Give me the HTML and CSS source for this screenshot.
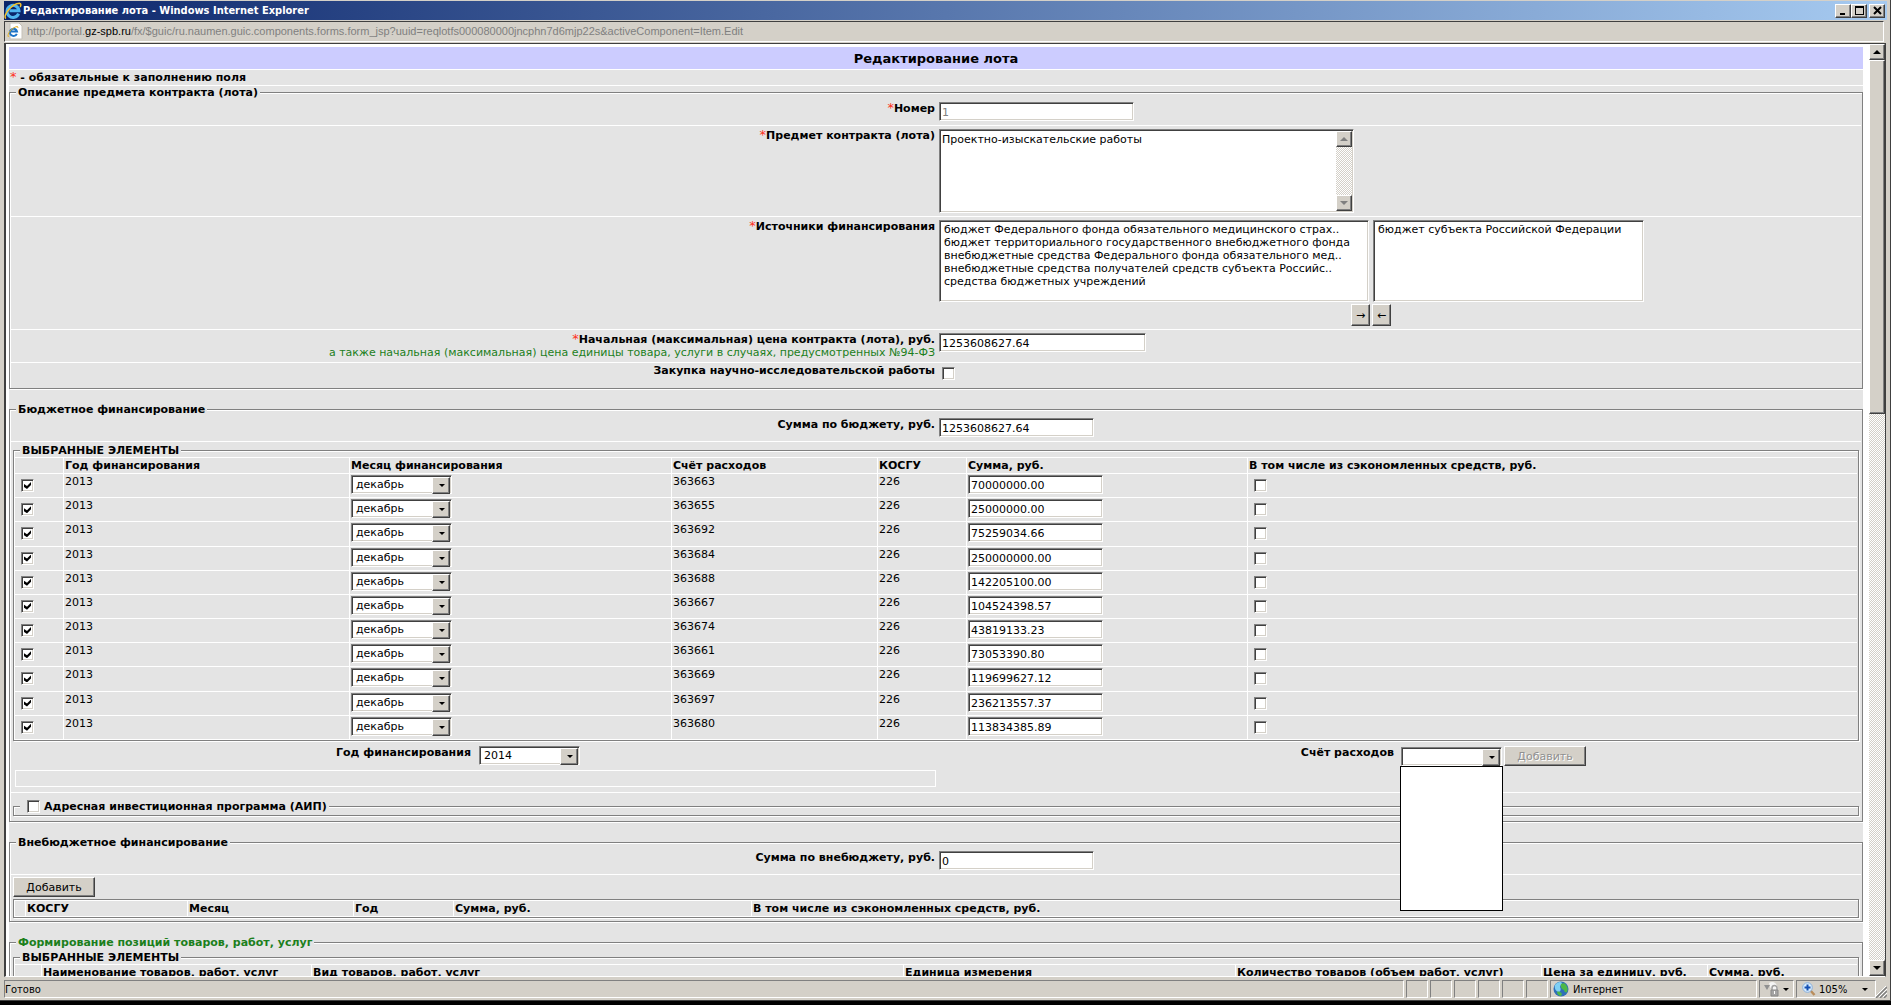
FILE: index.html
```html
<!DOCTYPE html>
<html lang="ru">
<head>
    <meta charset="UTF-8">
    <meta name="viewport" content="width=device-width, initial-scale=1.0">
    <title>Редактирование лота</title>
    <link rel="stylesheet" href="styles.css">
</head>
<body>

<div class="window">
    <header class="titlebar">
        <svg class="ie-icon" width="18" height="18" viewBox="0 0 18 18">
            <path d="M14.6 11.6A6 6 0 1 1 15 8.800H5.500" fill="none" stroke="#4fb4f0" stroke-width="3"/>
            <path d="M2 16.500C-2 14 8 1.500 15.500 1.300c2 .2 1.500 2.200 .6 3.700" fill="none" stroke="#f4c32c" stroke-width="1.500"/>
        </svg>
        <span class="titlebar-text">Редактирование лота - Windows Internet Explorer</span>
        <div class="titlebar-buttons">
            <button type="button" class="win-btn" aria-label="Свернуть"><svg width="9" height="9" viewBox="0 0 9 9"><path d="M1 7h5v2H1z"/></svg></button>
            <button type="button" class="win-btn" aria-label="Развернуть"><svg width="9" height="9" viewBox="0 0 9 9"><path d="M0 0h9v9H0zM1 2v6h7V2z" fill-rule="evenodd"/></svg></button>
            <button type="button" class="win-btn win-close" aria-label="Закрыть"><svg width="9" height="9" viewBox="0 0 9 9"><path d="M1 1l7 7M8 1l-7 7" stroke="#000" stroke-width="2"/></svg></button>
        </div>
    </header>

    <div class="address">
        <svg width="16" height="17" viewBox="0 0 16 17">
            <path d="M3 0h9l3 3v13H3z" fill="#fff" stroke="#c4c0b8"/>
            <path d="M9.800 10.800A3.600 3.600 0 1 1 10 8.500H4" fill="none" stroke="#1e74c8" stroke-width="2"/>
            <path d="M1.500 14C-1 11.500 6 3.500 10.500 3.500l.5 1.500" fill="none" stroke="#e8b020" stroke-width="1"/>
        </svg>
        <span class="address-url">http://portal.<b>gz-spb.ru</b>/fx/$guic/ru.naumen.guic.components.forms.form_jsp?uuid=reqlotfs000080000jncphn7d6mjp22s&amp;activeComponent=Item.Edit</span>
    </div>

    <div class="viewport">
        <form class="page">
            <div class="form-body">
                <h1>Редактирование лота</h1>
                <p class="required-note"><span class="star">*</span> - обязательные к заполнению поля</p>

                <fieldset class="section">
                    <legend>Описание предмета контракта (лота)</legend>
                    <div class="row">
                        <label for="number"><span class="star">*</span>Номер</label>
                        <div class="value"><input type="text" id="number" class="w-number" value="1" disabled></div>
                    </div>
                    <div class="row">
                        <label for="subject"><span class="star">*</span>Предмет контракта (лота)</label>
                        <div class="value">
                            <div class="memo">
                                <textarea id="subject">Проектно-изыскательские работы</textarea>
                                <div class="scroll disabled">
                                    <span class="scroll-btn up"></span>
                                    <span class="scroll-btn down"></span>
                                </div>
                            </div>
                        </div>
                    </div>
                    <div class="row">
                        <label for="sources"><span class="star">*</span>Источники финансирования</label>
                        <div class="value">
                            <div class="picker">
                                <select id="sources" class="list list-all" size="6">
                                    <option>бюджет Федерального фонда обязательного медицинского страх..</option>
                                    <option>бюджет территориального государственного внебюджетного фонда</option>
                                    <option>внебюджетные средства Федерального фонда обязательного мед..</option>
                                    <option>внебюджетные средства получателей средств субъекта Российс..</option>
                                    <option>средства бюджетных учреждений</option>
                                </select>
                                <select class="list list-chosen" size="6" aria-label="Выбранные источники">
                                    <option>бюджет субъекта Российской Федерации</option>
                                </select>
                            </div>
                            <div class="picker-buttons">
                                <button type="button">→</button>
                                <button type="button">←</button>
                            </div>
                        </div>
                    </div>
                    <div class="row">
                        <label for="price"><span class="star">*</span>Начальная (максимальная) цена контракта (лота), руб.
                            <small>а также начальная (максимальная) цена единицы товара, услуги в случаях, предусмотренных №94-ФЗ</small></label>
                        <div class="value"><input type="text" id="price" class="w-price" value="1253608627.64"></div>
                    </div>
                    <div class="row row-check">
                        <label for="research">Закупка научно-исследовательской работы</label>
                        <div class="value"><input type="checkbox" id="research"></div>
                    </div>
                </fieldset>

                <fieldset class="section">
                    <legend>Бюджетное финансирование</legend>
                    <div class="row row-sum">
                        <label for="budget">Сумма по бюджету, руб.</label>
                        <div class="value"><input type="text" id="budget" class="w-sum" value="1253608627.64"></div>
                    </div>

                    <fieldset class="group">
                        <legend>ВЫБРАННЫЕ ЭЛЕМЕНТЫ</legend>
                        <table class="items">
                            <colgroup>
                                <col class="c-check"><col class="c-year"><col class="c-month"><col class="c-account"><col class="c-kosgu"><col class="c-sum"><col>
                            </colgroup>
                            <thead>
                                <tr>
                                    <th></th>
                                    <th>Год финансирования</th>
                                    <th>Месяц финансирования</th>
                                    <th>Счёт расходов</th>
                                    <th>КОСГУ</th>
                                    <th>Сумма, руб.</th>
                                    <th>В том числе из сэкономленных средств, руб.</th>
                                </tr>
                            </thead>
                            <tbody id="items"></tbody>
                        </table>
                    </fieldset>

                    <div class="new-line">
                        <div class="adding">
                            <div class="adding-year">
                                <label for="year">Год финансирования</label>
                                <span class="combo"><select id="year"><option>2014</option></select></span>
                            </div>
                            <div class="adding-account">
                                <label for="account">Счёт расходов</label>
                                <span class="combo">
                                    <select id="account"><option></option></select>
                                    <span class="dropdown"></span>
                                </span>
                                <button type="button" disabled>Добавить</button>
                            </div>
                        </div>
                        <div class="placeholder"></div>
                    </div>

                    <fieldset class="group aip">
                        <legend><input type="checkbox" id="aip"><label for="aip">Адресная инвестиционная программа (АИП)</label></legend>
                    </fieldset>
                </fieldset>

                <fieldset class="section">
                    <legend>Внебюджетное финансирование</legend>
                    <div class="row row-sum">
                        <label for="extra">Сумма по внебюджету, руб.</label>
                        <div class="value"><input type="text" id="extra" class="w-sum" value="0"></div>
                    </div>
                    <button type="button" class="add-extra">Добавить</button>
                    <fieldset class="group">
                        <table class="extra">
                            <colgroup>
                                <col class="e-mark"><col class="e-kosgu"><col class="e-month"><col class="e-year"><col class="e-sum"><col>
                            </colgroup>
                            <tr>
                                <th></th>
                                <th>КОСГУ</th>
                                <th>Месяц</th>
                                <th>Год</th>
                                <th>Сумма, руб.</th>
                                <th>В том числе из сэкономленных средств, руб.</th>
                            </tr>
                        </table>
                    </fieldset>
                </fieldset>

                <fieldset class="section">
                    <legend class="green">Формирование позиций товаров, работ, услуг</legend>
                    <fieldset class="group">
                        <legend>ВЫБРАННЫЕ ЭЛЕМЕНТЫ</legend>
                        <table class="goods">
                            <colgroup>
                                <col class="g-mark"><col class="g-name"><col class="g-kind"><col class="g-unit"><col class="g-count"><col class="g-price"><col>
                            </colgroup>
                            <tr>
                                <th></th>
                                <th>Наименование товаров, работ, услуг</th>
                                <th>Вид товаров, работ, услуг</th>
                                <th>Единица измерения</th>
                                <th>Количество товаров (объем работ, услуг)</th>
                                <th>Цена за единицу, руб.</th>
                                <th>Сумма, руб.</th>
                            </tr>
                        </table>
                    </fieldset>
                </fieldset>
            </div>
        </form>
        <div class="scroll">
            <span class="scroll-btn up"></span>
            <span class="thumb"></span>
            <span class="scroll-btn down"></span>
        </div>
    </div>

    <footer class="status">
        <div class="cell cell-main">Готово</div>
        <div class="cell cell-small"></div>
        <div class="cell cell-small"></div>
        <div class="cell cell-small"></div>
        <div class="cell cell-small"></div>
        <div class="cell cell-small"></div>
        <div class="cell cell-small"></div>
        <div class="cell cell-zone">
            <svg width="16" height="16" viewBox="0 0 16 16">
                <circle cx="8" cy="8" r="7.500" fill="#2f6fb8"/>
                <path d="M2 4c2-3 6-4 7-2 0 2-2 2-2 4 1 2 1 4-1 5-3 0-5-4-4-7z" fill="#7fd0f4"/>
                <path d="M8 3c2-1 4-1 5 1 2 2 2 5 1 7-1 1-3 0-3-2-2 0-4-4-3-6zM4 11c2-1 4 0 5 2l-1 2c-2 0-4-2-4-4z" fill="#4db848"/>
            </svg>
            Интернет
        </div>
        <div class="cell cell-lock">
            <svg width="16" height="16" viewBox="0 0 16 16">
                <path d="M5 2C8 0 12 1 13 5l1 4H8L6 6z" fill="#f4f4f4"/>
                <path d="M0 4h6L3 9z" fill="#909090"/>
                <path d="M8 9V7a2.500 2.500 0 0 1 5 0v2" fill="none" stroke="#a0a0a0" stroke-width="1.500"/>
                <path d="M7 9h7v6H7z" fill="#a4a4a4" stroke="#888"/>
                <path d="M10 10h1v3h-1z" fill="#fff"/>
            </svg>
            <span class="arrow"></span>
        </div>
        <div class="cell cell-zoom">
            <svg width="14" height="14" viewBox="0 0 14 14">
                <path d="M8 8l4.500 5" stroke="#b98d5c" stroke-width="2.500"/>
                <circle cx="5.500" cy="5.500" r="4.800" fill="#d8ecfc" stroke="#8ab0dc"/>
                <path d="M5.500 2.500v6M2.500 5.500h6" stroke="#1450b4" stroke-width="2"/>
            </svg>
            <span class="zoom-text">105%</span>
            <span class="arrow"></span>
        </div>
        <svg class="grip" width="12" height="12" viewBox="0 0 12 12">
            <path d="M1 12L12 1M5 12l7-7M9 12l3-3" stroke="#808080" stroke-width="1.500"/>
            <path d="M0 11L11 0M4 11l8-8M8 11l4-4" stroke="#fff"/>
        </svg>
    </footer>
</div>

<script>
    const items = [
        ['363663', '70000000.00'],
        ['363655', '25000000.00'],
        ['363692', '75259034.66'],
        ['363684', '250000000.00'],
        ['363688', '142205100.00'],
        ['363667', '104524398.57'],
        ['363674', '43819133.23'],
        ['363661', '73053390.80'],
        ['363669', '119699627.12'],
        ['363697', '236213557.37'],
        ['363680', '113834385.89']
    ];

    document.getElementById('items').innerHTML = items.map(([account, sum]) => `
        <tr>
            <td><input type="checkbox" aria-label="Выбрать ${account}" checked></td>
            <td>2013</td>
            <td><span class="combo"><select aria-label="Месяц ${account}"><option>декабрь</option></select></span></td>
            <td>${account}</td>
            <td>226</td>
            <td><input type="text" aria-label="Сумма ${account}" value="${sum}"></td>
            <td><input type="checkbox" aria-label="Из сэкономленных средств ${account}"></td>
        </tr>
    `).join('');
</script>

</body>
</html>
```
FILE: styles.css
```css
* {
    box-sizing: border-box;
}

body {
    margin: 0;
    background: #000;
    font-family: Verdana, "DejaVu Sans", sans-serif;
    font-size: 11px;
    line-height: 13px;
    color: #000;
}

.window {
    display: flex;
    flex-direction: column;
    height: calc(100vh - 4px);
    padding: 0 3px 0 4px;
    background: #d4d0c8;
    border-bottom: 1px solid #404040;
    border-right: 1px solid #404040;
}

/* title bar */
.titlebar {
    display: flex;
    align-items: center;
    height: 19px;
    margin-top: 1px;
    background: linear-gradient(to right, #0a246a, #a6caf0);
    color: #fff;
    flex: none;
}

.titlebar-text {
    flex: 1;
    margin-left: 1px;
    font-family: Tahoma, "DejaVu Sans Condensed", sans-serif;
    font-size: 11px;
    font-weight: bold;
}

.titlebar-buttons {
    display: flex;
    padding-right: 2px;
}

button {
    padding: 0;
    background: #d4d0c8;
    border: 1px solid;
    border-color: #fff #404040 #404040 #fff;
    border-radius: 0;
    box-shadow: inset -1px -1px 0 #808080;
    font: inherit;
    color: #000;
}

button:disabled {
    color: #909090;
    text-shadow: 1px 1px 0 #fff;
}

.win-btn {
    display: flex;
    justify-content: center;
    align-items: center;
    width: 16px;
    height: 14px;
}

.win-close {
    margin-left: 2px;
}

/* address */
.address {
    display: flex;
    align-items: center;
    flex: none;
    height: 21px;
    margin: 1px 3px 1px 0;
    padding-left: 2px;
    border-top: 1px solid #404040;
    border-bottom: 1px solid #fff;
    border-right: 1px solid #fff;
    border-left: 1px solid #404040;
}

.address-url {
    margin-left: 4px;
    font-family: Tahoma, "Liberation Sans", sans-serif;
    font-size: 11px;
    color: #808080;
    white-space: nowrap;
}

.address-url b {
    font-weight: normal;
    color: #000;
}

/* page */
.viewport {
    display: flex;
    flex: 1;
    min-height: 0;
    background: #fff;
    border: 1px solid #404040;
    border-left-width: 2px;
    border-bottom-color: #fff;
    margin-right: 1px;
}

.page {
    flex: 1;
    min-width: 0;
    padding: 3px 6px 0 3px;
    overflow: hidden;
}

.form-body {
    background: #e4e4e4;
}

h1 {
    margin: 0;
    height: 23px;
    border-bottom: 1px solid #fff;
    background: #ccccff;
    font-size: 13px;
    line-height: 23px;
    text-align: center;
}

.required-note {
    margin: 0;
    height: 16px;
    padding-left: 1px;
    border-bottom: 1px solid #fff;
    font-weight: bold;
    line-height: 16px;
}

.star {
    color: #ff3020;
    font-size: 13px;
    line-height: 0;
    font-weight: normal;
}

fieldset {
    min-width: 0;
    margin: 0;
    padding: 0 1px;
    border: 1px solid #808080;
    box-shadow: 1px 1px 0 #fff, inset 1px 1px 0 #fff;
}

legend {
    margin-left: 5px;
    padding: 0 2px;
    background: #e4e4e4;
    font-weight: bold;
}

.green {
    color: #1c7f1c;
}

.section {
    margin-bottom: 14px;
}

.group {
    margin: 2px 2px 3px;
}

.row {
    display: grid;
    grid-template-columns: 1fr 1fr;
    padding: 3px 0;
    border-bottom: 1px solid #fff;
}

.row > label {
    padding-right: 1px;
    text-align: right;
    font-weight: bold;
}

.row small {
    display: block;
    font-size: 11px;
    font-weight: normal;
    color: #1c7f1c;
}

.value {
    padding-left: 3px;
}

.row-check {
    height: 25px;
    padding-top: 1px;
    border-bottom: 0;
}

.row-check .value {
    padding: 3px 0 0 6px;
}

.row-sum {
    height: 26px;
    padding-top: 2px;
}

legend + .row {
    height: 27px;
}

legend + .row-sum {
    height: 26px;
}

/* controls */
input[type="text"],
.memo,
.list,
.combo select {
    display: block;
    border: 1px solid;
    border-color: #808080 #fff #fff #808080;
    border-radius: 0;
    box-shadow: inset 1px 1px 0 #404040, inset -1px -1px 0 #d4d0c8;
    background: #fff;
    font: inherit;
    color: #000;
}

input[type="text"] {
    height: 19px;
    width: 135px;
    padding: 3px 2px 1px 2px;
}

input[type="text"]:disabled {
    color: #808080;
}

input.w-number {
    width: 195px;
}

input.w-price {
    width: 207px;
}

input.w-sum {
    width: 155px;
}

.memo {
    display: flex;
    width: 415px;
    height: 84px;
    padding: 1px;
}

.memo textarea {
    flex: 1;
    padding: 2px 1px;
    border: 0;
    background: none;
    resize: none;
    outline: none;
    overflow: hidden;
    font: inherit;
    color: #000;
}

.picker {
    display: flex;
    gap: 4px;
}

.list {
    height: 82px;
    padding: 2px;
    overflow: hidden;
}

.list option {
    min-height: 13px;
    padding: 0 2px;
}

.list-all {
    width: 430px;
}

.list-chosen {
    width: 271px;
}

.picker-buttons {
    display: flex;
    gap: 2px;
    margin-top: 2px;
    padding-left: 412px;
}

.picker-buttons button {
    width: 19px;
    height: 22px;
}

.combo {
    position: relative;
    display: block;
    width: 101px;
}

.combo select {
    width: 100%;
    height: 19px;
    padding: 1px 4px;
    appearance: none;
}

.combo::before,
.combo::after {
    content: "";
    position: absolute;
    pointer-events: none;
}

.combo::before {
    top: 2px;
    right: 2px;
    width: 16px;
    height: 15px;
    background: #d4d0c8;
    border: 1px solid;
    border-color: #fff #404040 #404040 #fff;
    box-shadow: inset -1px -1px 0 #808080;
}

.combo::after {
    top: 9px;
    right: 7px;
    border: 3px solid transparent;
    border-top-color: #000;
    border-bottom: 0;
}

.dropdown {
    position: absolute;
    top: 19px;
    left: -1px;
    z-index: 1;
    width: 103px;
    height: 145px;
    background: #fff;
    border: 1px solid #000;
}

input[type="checkbox"] {
    display: block;
    appearance: none;
    width: 13px;
    height: 13px;
    margin: 0;
    background: #fff;
    border: 1px solid;
    border-color: #808080 #fff #fff #808080;
    box-shadow: inset 1px 1px 0 #404040, inset -1px -1px 0 #d4d0c8;
}

input[type="checkbox"]:checked::before {
    content: "";
    display: block;
    width: 7px;
    height: 7px;
    margin: 2px;
    background: #000;
    clip-path: polygon(0 2px, 3px 4px, 7px 0, 7px 3px, 3px 7px, 0 5px);
}

/* tables */
table {
    width: 100%;
    table-layout: fixed;
    border-collapse: separate;
    border-spacing: 0;
}

th,
td {
    padding: 0 1px;
    border-left: 1px solid #fff;
    border-bottom: 1px solid #fff;
    text-align: left;
    vertical-align: top;
    white-space: nowrap;
}

th:first-child,
td:first-child {
    border-left: 0;
}

th {
    height: 16px;
    line-height: 15px;
}

.items {
    height: 283px;
    border-top: 1px solid #fff;
}

.items td {
    padding-top: 1px;
}

.items tr {
    height: 24px;
}

.items thead tr {
    height: 16px;
}

.items input[type="checkbox"] {
    margin: 4px 0 0 5px;
}

.c-check { width: 48px; }
.c-year { width: 286px; }
.c-month { width: 322px; }
.c-account { width: 206px; }
.c-kosgu { width: 89px; }
.c-sum { width: 281px; }

.e-mark { width: 10px; }
.e-kosgu { width: 162px; }
.e-month { width: 166px; }
.e-year { width: 100px; }
.e-sum { width: 298px; }

.g-mark { width: 26px; }
.g-name { width: 270px; }
.g-kind { width: 592px; }
.g-unit { width: 332px; }
.g-count { width: 306px; }
.g-price { width: 166px; }

.goods,
.extra {
    border-top: 1px solid #fff;
}

/* adding a budget line */
.new-line {
    border-bottom: 1px solid #fff;
    padding-bottom: 5px;
}

.adding {
    display: grid;
    grid-template-columns: 1fr 1fr;
    height: 26px;
    padding-top: 2px;
}

.adding label {
    font-weight: bold;
    text-align: right;
}

.adding-year,
.adding-account {
    display: grid;
    align-items: start;
}

.adding-year {
    grid-template-columns: 1fr 1fr;
    column-gap: 8px;
    padding-left: 3px;
}

.adding-account {
    grid-template-columns: 1fr 101px 1fr;
    column-gap: 2px;
    padding-left: 106px;
}

.adding-account label {
    padding-right: 5px;
}

.adding-account .combo {
    margin-top: 1px;
}

.adding-account button {
    width: 82px;
    height: 20px;
}

.placeholder {
    width: calc(50% - 4px);
    height: 17px;
    margin: 0 4px;
    border: 1px solid #fff;
}

.aip {
    height: 16px;
    margin-top: 7px;
    margin-bottom: 5px;
}

.aip legend {
    display: flex;
    height: 13px;
}

.aip legend input {
    margin: 0 4px 0 5px;
}

.add-extra {
    display: block;
    width: 82px;
    height: 20px;
    margin: 2px 2px 0;
}

/* scrollbars */
.scroll {
    display: flex;
    flex-direction: column;
    flex: none;
    width: 16px;
    background: repeating-conic-gradient(#fff 0 25%, #d4d0c8 0 50%) 0 0 / 2px 2px;
}

.scroll-btn,
.thumb {
    background: #d4d0c8;
    border: 1px solid;
    border-color: #fff #404040 #404040 #fff;
    box-shadow: inset -1px -1px 0 #808080;
}

.scroll-btn {
    display: flex;
    justify-content: center;
    align-items: center;
    height: 16px;
    flex: none;
}

.scroll-btn::before {
    content: "";
    border: 4px solid transparent;
}

.scroll-btn.up::before {
    border-bottom-color: #000;
    border-top: 0;
}

.scroll-btn.down {
    margin-top: auto;
}

.scroll-btn.down::before {
    border-top-color: #000;
    border-bottom: 0;
}

.disabled .up::before {
    border-bottom-color: #808080;
}

.disabled .down::before {
    border-top-color: #808080;
}

.thumb {
    height: 38%;
}

/* status bar */
.status {
    display: flex;
    flex: none;
    gap: 2px;
    height: 23px;
    padding: 3px 0 2px;
    font-family: Tahoma, "DejaVu Sans Condensed", sans-serif;
}

.cell {
    display: flex;
    align-items: center;
    border: 1px solid;
    border-color: #808080 #fff #fff #808080;
}

.cell-main {
    flex: 1;
}

.cell-small {
    width: 22px;
}

.cell-zone {
    width: 207px;
    padding-left: 2px;
    gap: 4px;
}

.cell-lock {
    width: 35px;
    padding: 0 4px;
    justify-content: space-between;
}

.cell-zoom {
    width: 80px;
    padding: 0 7px 0 5px;
    gap: 3px;
}

.zoom-text {
    flex: 1;
}

.arrow {
    border: 3px solid transparent;
    border-top-color: #000;
    border-bottom: 0;
}

.grip {
    align-self: flex-end;
    margin-left: -3px;
}
```
